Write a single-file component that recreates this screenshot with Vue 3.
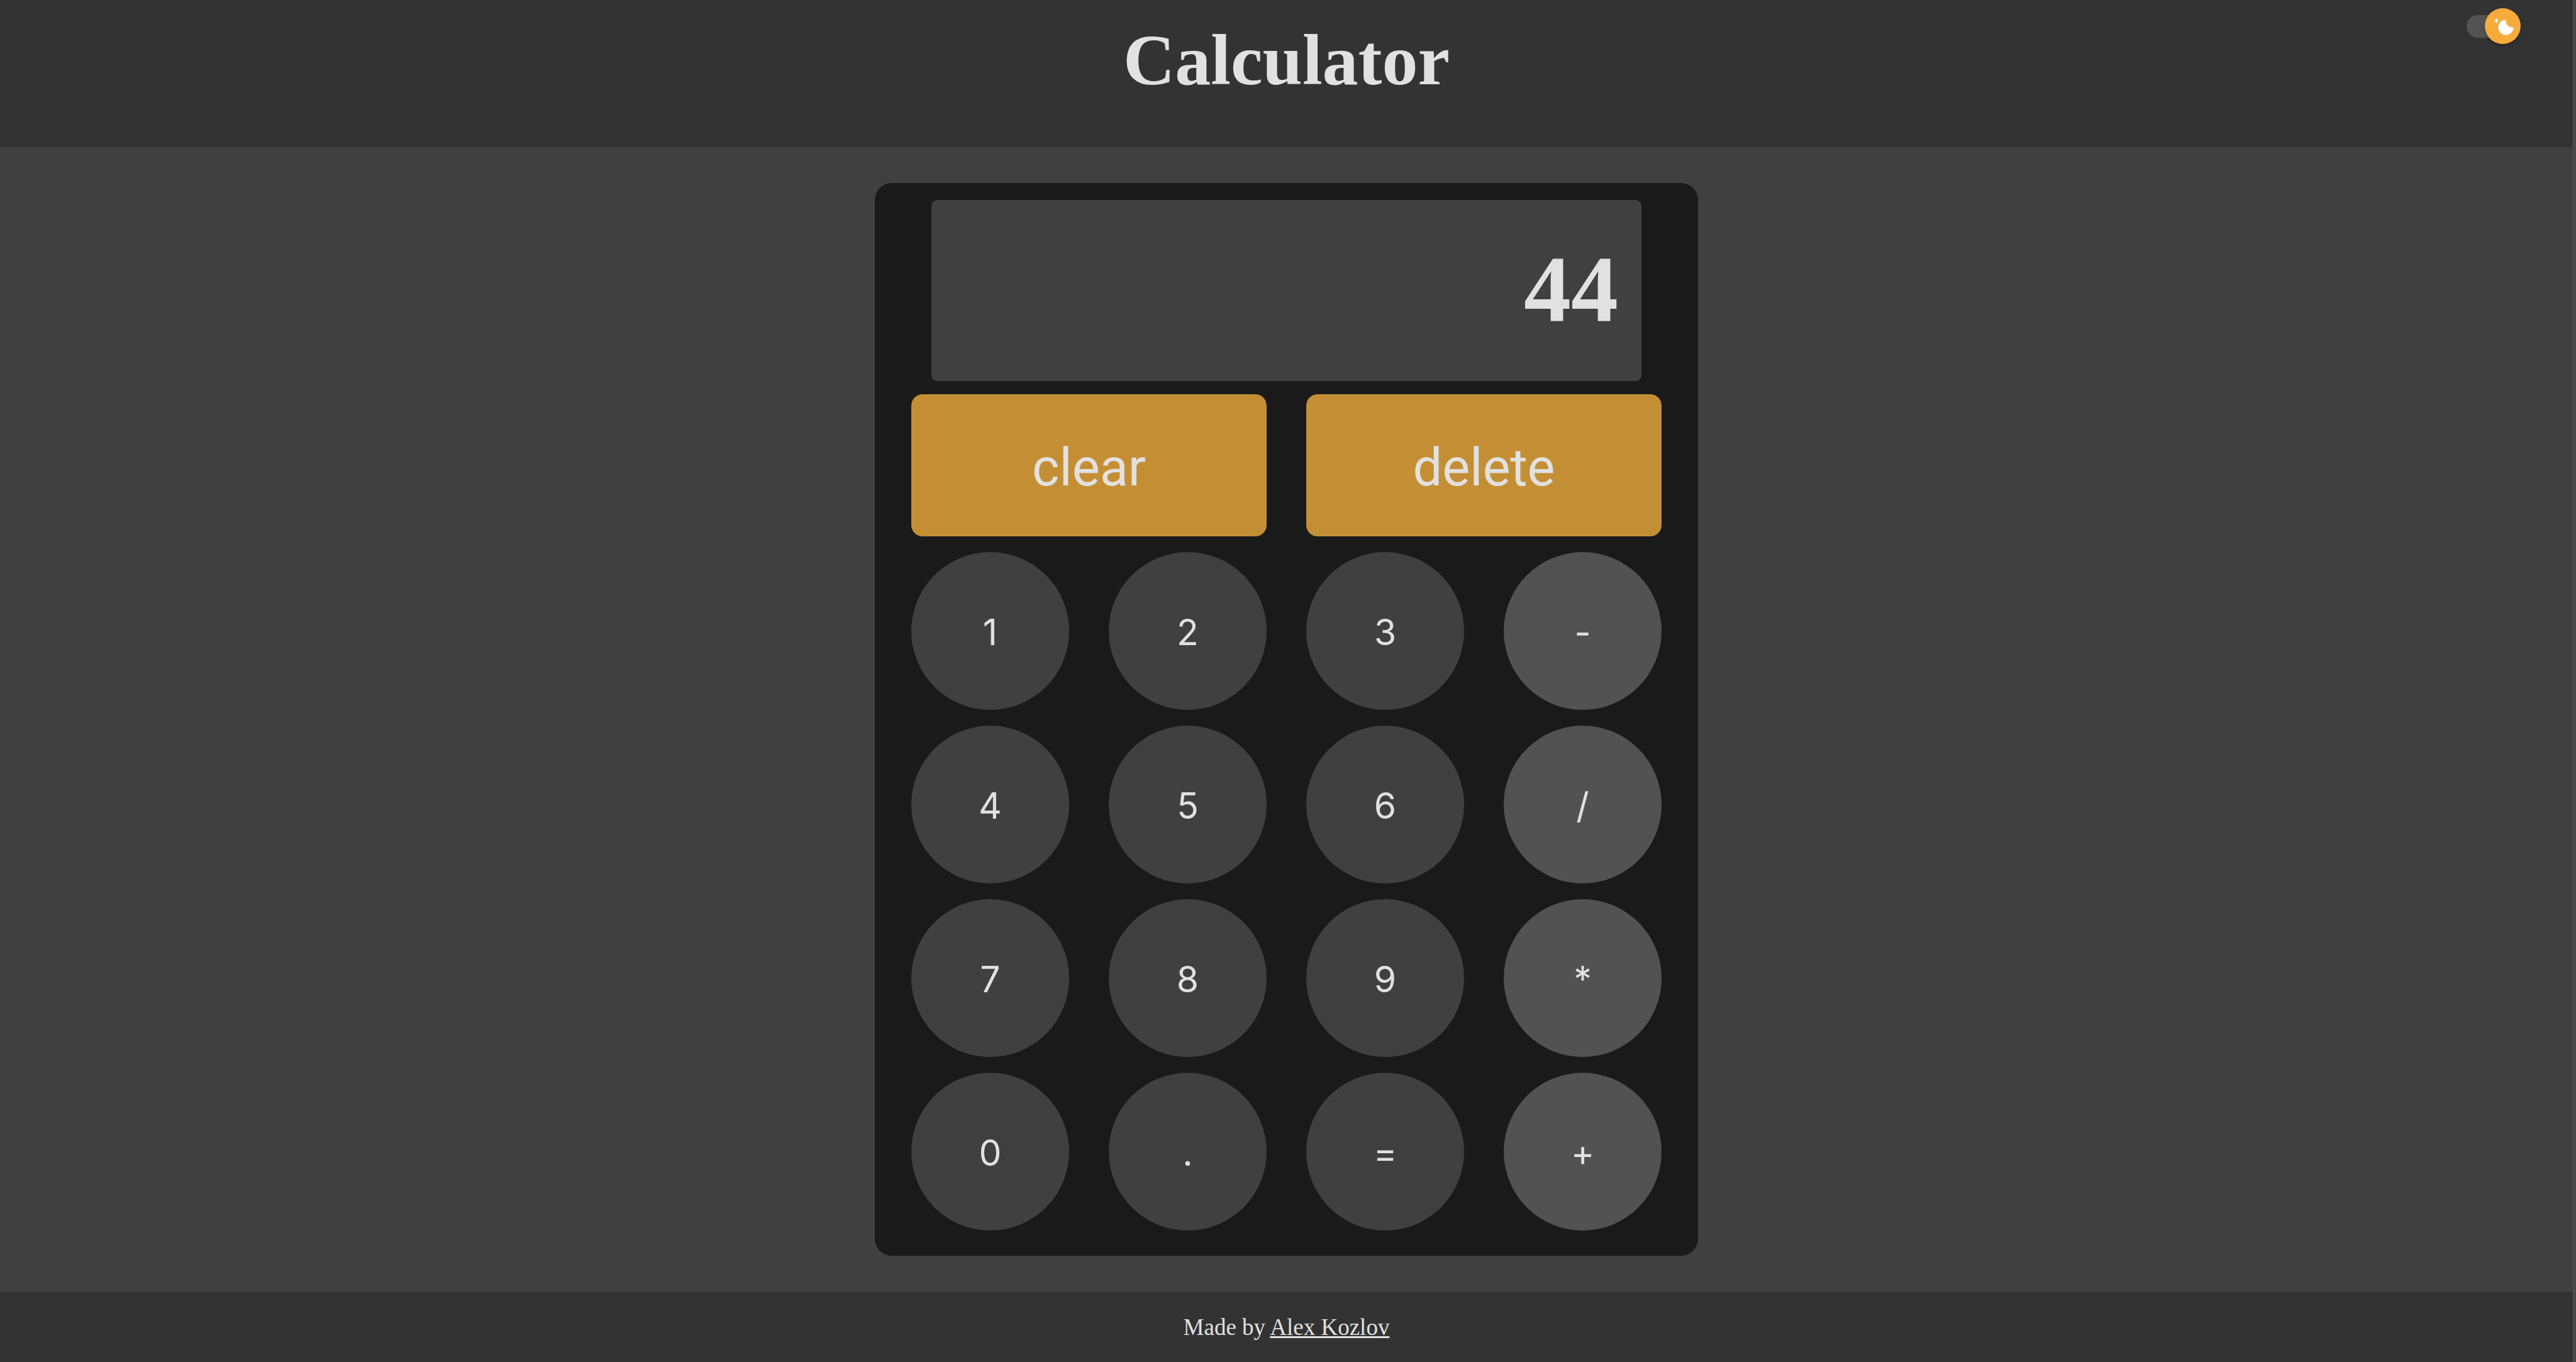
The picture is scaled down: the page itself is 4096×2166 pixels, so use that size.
<script setup>
import { ref } from 'vue'

const display = ref('44')
const dark = ref(true)

const keys = ['1', '2', '3', '-', '4', '5', '6', '/', '7', '8', '9', '*', '0', '.', '=', '+']
const operators = ['-', '/', '*', '+']

const stored = ref(null)
const pending = ref('')
const fresh = ref(false)

function compute(a, b, op) {
  if (op === '+') return a + b
  if (op === '-') return a - b
  if (op === '*') return a * b
  return a / b
}

function resolve() {
  if (!pending.value) return
  display.value = String(compute(stored.value, Number(display.value), pending.value))
  pending.value = ''
}

function press(key) {
  if (key === '=') {
    resolve()
    fresh.value = true
  } else if (operators.includes(key)) {
    resolve()
    stored.value = Number(display.value)
    pending.value = key
    fresh.value = true
  } else if (key !== '.' || fresh.value || !display.value.includes('.')) {
    display.value = fresh.value || (display.value === '0' && key !== '.') ? key : display.value + key
    fresh.value = false
  }
}

function clearAll() {
  display.value = '0'
  stored.value = null
  pending.value = ''
}

function deleteLast() {
  display.value = display.value.slice(0, -1) || '0'
}
</script>

<template>
  <div class="shell">
    <div class="page">
      <header class="header">
        <h1 class="title">Calculator</h1>
        <label class="switch">
          <input v-model="dark" type="checkbox" class="switch-input" aria-label="Dark theme" />
          <span class="knob">
            <svg class="moon" viewBox="0 0 20 20" aria-hidden="true">
              <path
                fill="#fff"
                d="M4.2 2.5l-.7 1.8-1.8.7 1.8.7.7 1.8.6-1.8L6.7 5l-1.9-.7-.6-1.8zm15 8.3a6.7 6.7 0 1 1-6.6-6.6 5.8 5.8 0 0 0 6.6 6.6z"
              />
            </svg>
          </span>
        </label>
      </header>

      <main class="main">
        <section class="calculator">
          <output class="display">{{ display }}</output>
          <div class="actions">
            <button type="button" class="action" @click="clearAll">clear</button>
            <button type="button" class="action" @click="deleteLast">delete</button>
          </div>
          <div class="keys">
            <button
              v-for="key in keys"
              :key="key"
              type="button"
              class="key"
              :class="{ operator: operators.includes(key) }"
              @click="press(key)"
            >{{ key }}</button>
          </div>
        </section>
      </main>

      <footer class="footer">
        <p class="credit">Made by <a class="author" href="#">Alex Kozlov</a></p>
      </footer>
    </div>
    <div class="gutter"></div>
  </div>
</template>

<style>
body {
  margin: 0;
  background: #404040;
}
</style>

<style scoped>
.shell {
  display: flex;
  min-height: 100vh;
  color: #e1e1e1;
  font-family: "Liberation Serif", "Times New Roman", serif;
}

.page {
  display: flex;
  flex: 1;
  flex-direction: column;
  background: #404040;
}

.gutter {
  box-sizing: border-box;
  width: 5px;
  border-left: 1px solid #555;
  background: #484848;
}

.header {
  display: grid;
  grid-template-columns: 1fr auto 1fr;
  align-items: start;
  box-sizing: border-box;
  min-height: 234px;
  background: #333;
}

.title {
  grid-column: 2;
  margin: 30px 0 0;
  font-size: 114px;
  font-weight: 700;
  line-height: 131px;
}

.switch {
  display: flex;
  align-items: center;
  justify-self: end;
  margin: 13px 83px 0 0;
  cursor: pointer;
}

.switch-input {
  width: 60px;
  height: 36px;
  margin: 0 -31px 0 0;
  border-radius: 18px;
  background: #535353;
  appearance: none;
}

.knob {
  display: flex;
  align-items: center;
  justify-content: center;
  width: 57px;
  height: 57px;
  border-radius: 50%;
  background: #f6ab3b;
  box-shadow: 0 2px 4px rgba(0, 0, 0, 0.4);
  z-index: 1;
}

.moon {
  width: 36px;
  height: 36px;
}

.main {
  display: flex;
  flex: 1;
  align-items: flex-start;
  justify-content: center;
  padding: 57px 0;
}

.calculator {
  display: flex;
  flex-direction: column;
  box-sizing: border-box;
  width: 32%;
  padding: 27px 58px 40px;
  border-radius: 27px;
  background: #1a1a1a;
}

.display {
  display: flex;
  align-items: center;
  justify-content: flex-end;
  box-sizing: border-box;
  height: 288px;
  margin: 0 32px 21px;
  padding: 0 37px 4px 0;
  border-radius: 9px;
  background: #404040;
  font-size: 150px;
  font-weight: 700;
}

.actions {
  display: grid;
  grid-template-columns: 1fr 1fr;
  gap: 63px;
  margin-bottom: 25px;
}

.action,
.key {
  border: 0;
  color: #e1e1e1;
  cursor: pointer;
}

.action {
  height: 226px;
  padding: 6px 0 0;
  border-radius: 18px;
  background: #c48f34;
  font-family: Roboto, sans-serif;
  font-size: 83px;
}

.keys {
  display: grid;
  grid-template-columns: repeat(4, 1fr);
  gap: 25px 63px;
}

.key {
  box-sizing: border-box;
  aspect-ratio: 1;
  padding: 3px 0 0;
  border-radius: 50%;
  background: #404040;
  font-family: Inter, sans-serif;
  font-size: 57px;
}

.operator {
  background: #525252;
}

.footer {
  display: flex;
  align-items: center;
  justify-content: center;
  min-height: 112px;
  background: #333;
}

.credit {
  margin: 0;
  font-size: 37px;
}

.author {
  color: inherit;
  text-decoration-thickness: 3px;
  text-underline-offset: 2px;
}
</style>
